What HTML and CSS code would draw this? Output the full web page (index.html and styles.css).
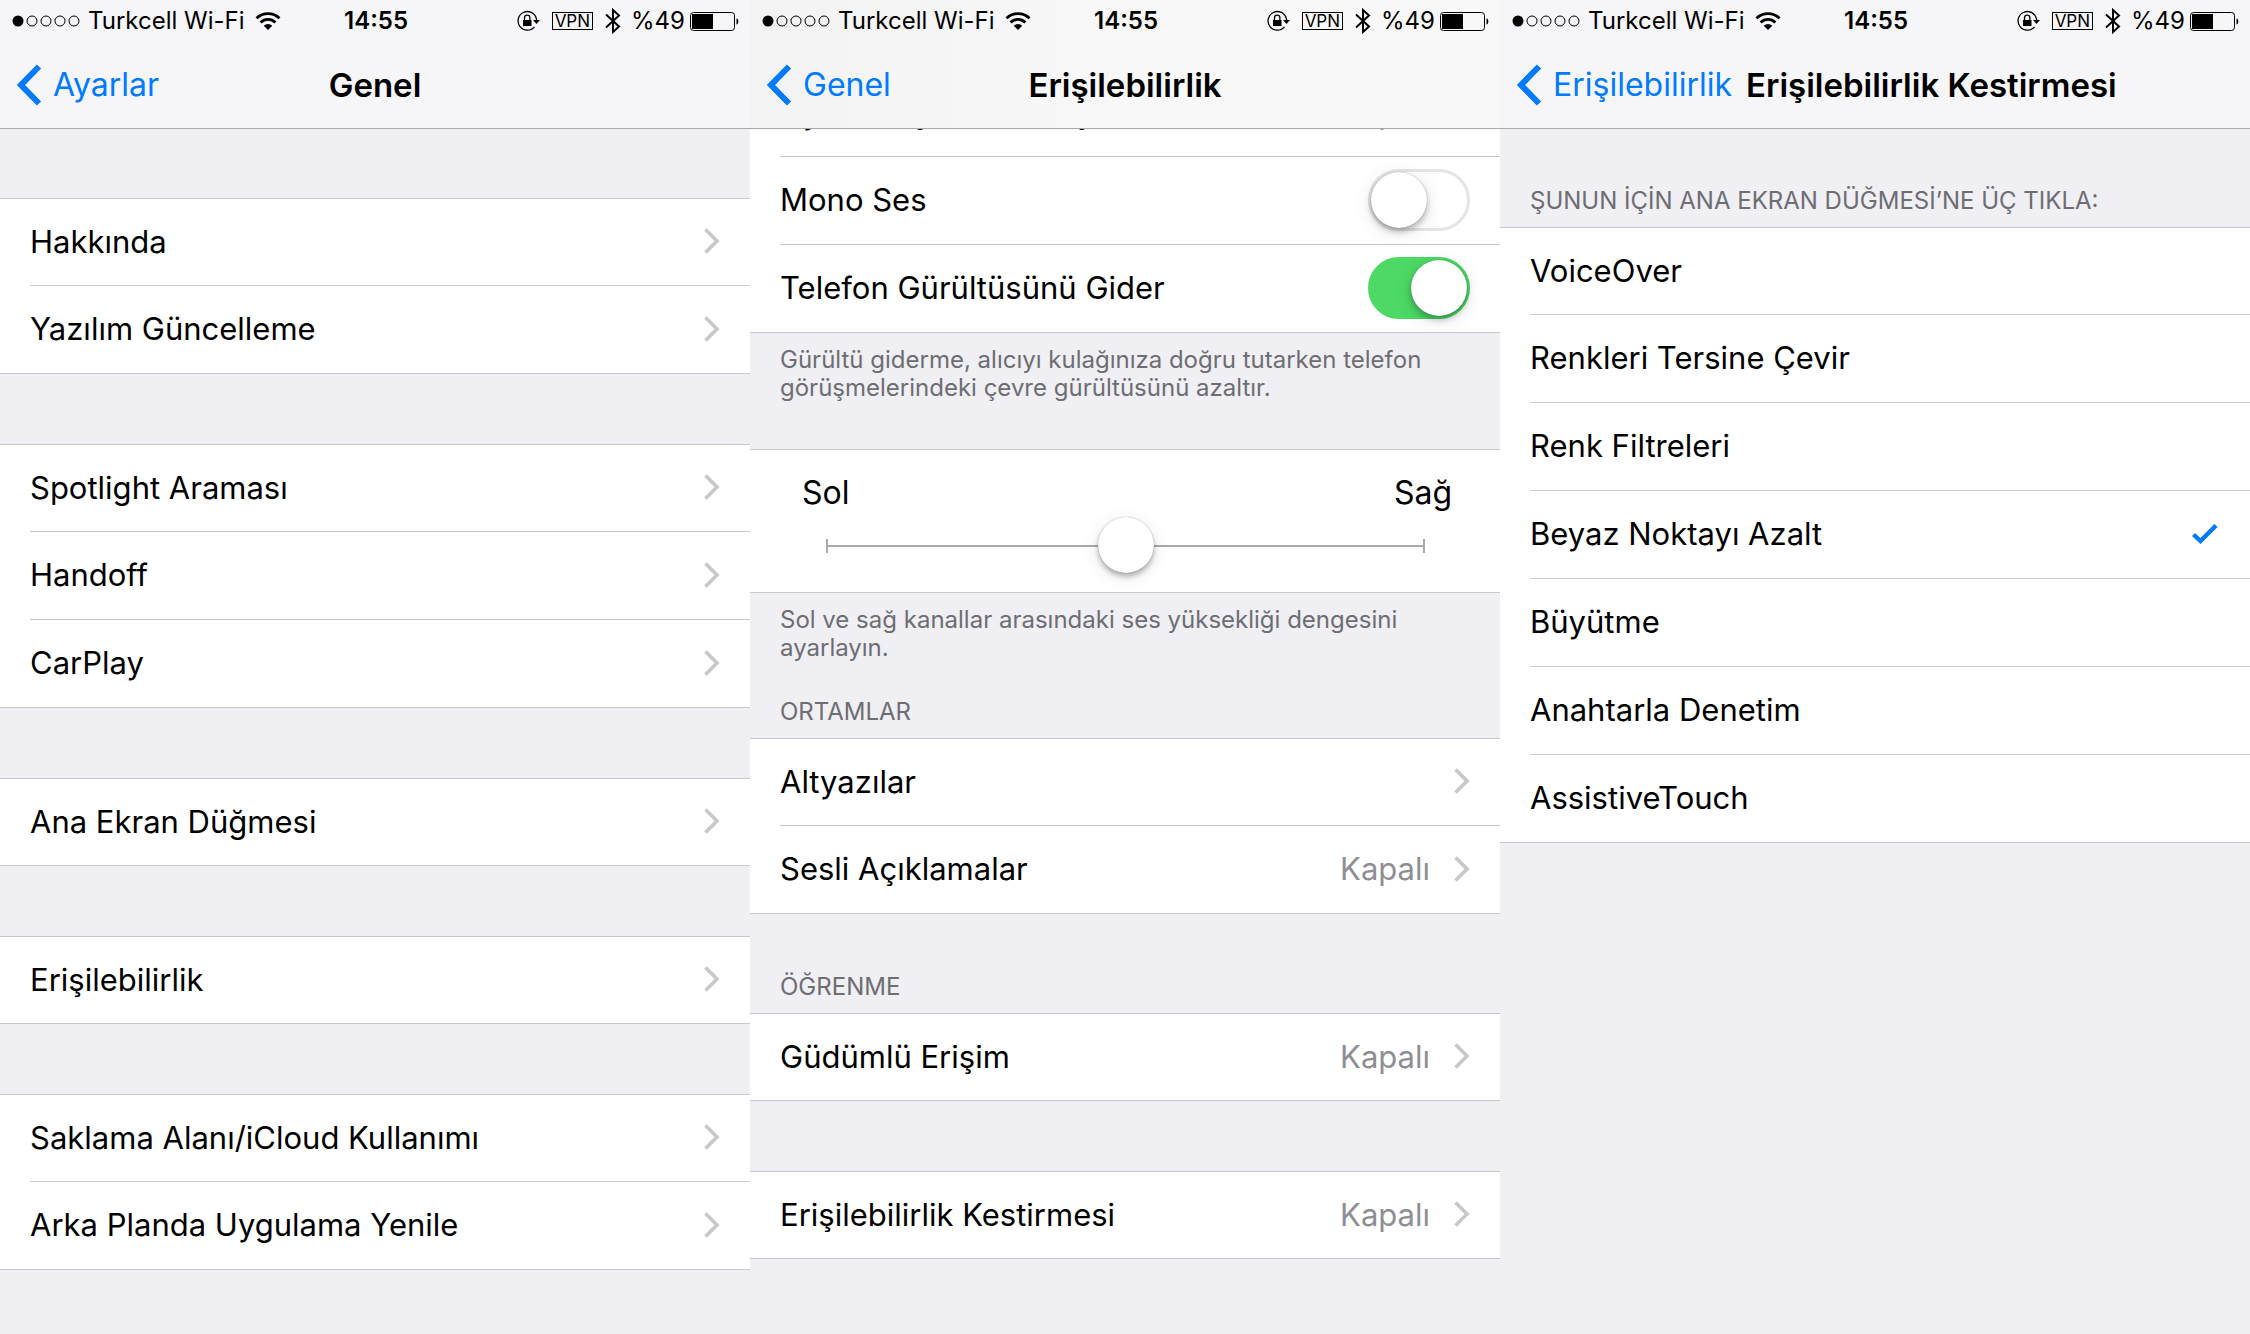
FILE: index.html
```html
<!DOCTYPE html>
<html lang="tr">
<head>
    <meta charset="UTF-8">
    <meta name="viewport" content="width=device-width, initial-scale=1.0">
    <title>Erişilebilirlik Kestirmesi</title>
    <link rel="stylesheet" href="styles.css">
</head>
<body>

<!-- ortak ikonlar -->
<svg class="sprite" aria-hidden="true">
    <symbol id="signal" viewBox="0 0 70 14">
        <circle cx="6" cy="7" r="5.5"/>
        <g fill="none" stroke="currentColor">
            <circle cx="20" cy="7" r="5"/><circle cx="34" cy="7" r="5"/><circle cx="48" cy="7" r="5"/><circle cx="62" cy="7" r="5"/>
        </g>
    </symbol>
    <symbol id="wifi" viewBox="0 0 26 18">
        <g fill="none" stroke="currentColor" stroke-width="2.8">
            <path d="M1.500 6.200a16.500 16.500 0 0 1 23 0"/>
            <path d="M5.600 10.400a10.500 10.500 0 0 1 14.800 0"/>
        </g>
        <path d="M13 18l-4.300-4.300a6 6 0 0 1 8.600 0z"/>
    </symbol>
    <symbol id="lock" viewBox="0 0 24 22">
        <path d="M18.500 16.800a9.300 9.300 0 1 1 1.900-8.200l.3 2" fill="none" stroke="currentColor" stroke-width="1.3"/>
        <path d="M17 10h7l-3.500 4z"/>
        <path d="M7 10h8.500v6H7z"/>
        <path d="M8.500 10V7.800a2.700 2.700 0 0 1 5.400 0V10" fill="none" stroke="currentColor" stroke-width="1.3"/>
    </symbol>
    <symbol id="bluetooth" viewBox="0 0 16 28">
        <path d="M1 7.500L14 19.500L8 25V3l6 5.500L1 20.500" fill="none" stroke="currentColor" stroke-width="2"/>
    </symbol>
    <symbol id="battery" viewBox="0 0 50 20">
        <rect x=".5" y="1.500" width="44" height="18" rx="3" fill="none" stroke="currentColor"/>
        <path d="M2 3h21v15H2zM46.500 7.500c2.500 0 2.500 6 0 6z"/>
    </symbol>
    <symbol id="back" viewBox="0 0 26 42">
        <path d="M23 2.500L5 21l18 18.500" fill="none" stroke="currentColor" stroke-width="6"/>
    </symbol>
    <symbol id="arrow" viewBox="0 0 16 26">
        <path d="M1.500 1.500L13 13L1.500 24.500" fill="none" stroke="currentColor" stroke-width="3.6"/>
    </symbol>
    <symbol id="check" viewBox="0 0 26 20">
        <path d="M1.500 10.500L8.500 17L24 1.500" fill="none" stroke="currentColor" stroke-width="4.4"/>
    </symbol>
</svg>

<main class="screens">

    <!-- Genel -->
    <section class="screen">
        <header class="bar">
            <div class="status">
                <div class="status-left"><svg class="i-signal"><use href="#signal"/></svg><span>Turkcell Wi-Fi</span><svg class="i-wifi"><use href="#wifi"/></svg></div>
                <time>14:55</time>
                <div class="status-right"><svg class="i-lock"><use href="#lock"/></svg><span class="vpn">VPN</span><svg class="i-bt"><use href="#bluetooth"/></svg><span>%49</span><svg class="i-battery"><use href="#battery"/></svg></div>
            </div>
            <nav class="nav">
                <a class="back" href="#"><svg><use href="#back"/></svg>Ayarlar</a>
                <h1>Genel</h1>
            </nav>
        </header>
        <div class="content">
            <ul class="group">
                <li><a class="row" href="#">Hakkında<svg class="arrow"><use href="#arrow"/></svg></a></li>
                <li><a class="row" href="#">Yazılım Güncelleme<svg class="arrow"><use href="#arrow"/></svg></a></li>
            </ul>
            <ul class="group">
                <li><a class="row" href="#">Spotlight Araması<svg class="arrow"><use href="#arrow"/></svg></a></li>
                <li><a class="row" href="#">Handoff<svg class="arrow"><use href="#arrow"/></svg></a></li>
                <li><a class="row" href="#">CarPlay<svg class="arrow"><use href="#arrow"/></svg></a></li>
            </ul>
            <ul class="group">
                <li><a class="row" href="#">Ana Ekran Düğmesi<svg class="arrow"><use href="#arrow"/></svg></a></li>
            </ul>
            <ul class="group">
                <li><a class="row" href="#">Erişilebilirlik<svg class="arrow"><use href="#arrow"/></svg></a></li>
            </ul>
            <ul class="group">
                <li><a class="row" href="#">Saklama Alanı/iCloud Kullanımı<svg class="arrow"><use href="#arrow"/></svg></a></li>
                <li><a class="row" href="#">Arka Planda Uygulama Yenile<svg class="arrow"><use href="#arrow"/></svg></a></li>
            </ul>
        </div>
    </section>

    <!-- Erişilebilirlik -->
    <section class="screen">
        <header class="bar bar-scrolled">
            <div class="status">
                <div class="status-left"><svg class="i-signal"><use href="#signal"/></svg><span>Turkcell Wi-Fi</span><svg class="i-wifi"><use href="#wifi"/></svg></div>
                <time>14:55</time>
                <div class="status-right"><svg class="i-lock"><use href="#lock"/></svg><span class="vpn">VPN</span><svg class="i-bt"><use href="#bluetooth"/></svg><span>%49</span><svg class="i-battery"><use href="#battery"/></svg></div>
            </div>
            <nav class="nav">
                <a class="back" href="#"><svg><use href="#back"/></svg>Genel</a>
                <h1>Erişilebilirlik</h1>
            </nav>
        </header>
        <div class="content scrolled">
            <ul class="group">
                <li><a class="row" href="#">Uyarılar için LED Flaş<span class="value">Kapalı</span><svg class="arrow"><use href="#arrow"/></svg></a></li>
                <li><label class="row" for="mono">Mono Ses<input class="switch" type="checkbox" id="mono"></label></li>
                <li><label class="row" for="noise">Telefon Gürültüsünü Gider<input class="switch" type="checkbox" id="noise" checked></label></li>
            </ul>
            <p class="note">Gürültü giderme, alıcıyı kulağınıza doğru tutarken telefon görüşmelerindeki çevre gürültüsünü azaltır.</p>
            <div class="group balance">
                <div class="sides"><label for="balance">Sol</label><span>Sağ</span></div>
                <input class="slider" type="range" id="balance" min="-1" max="1" step="0.1" value="0">
            </div>
            <p class="note">Sol ve sağ kanallar arasındaki ses yüksekliği dengesini ayarlayın.</p>
            <h2 class="after-note">ORTAMLAR</h2>
            <ul class="group">
                <li><a class="row" href="#">Altyazılar<svg class="arrow"><use href="#arrow"/></svg></a></li>
                <li><a class="row" href="#">Sesli Açıklamalar<span class="value">Kapalı</span><svg class="arrow"><use href="#arrow"/></svg></a></li>
            </ul>
            <h2>ÖĞRENME</h2>
            <ul class="group">
                <li><a class="row" href="#">Güdümlü Erişim<span class="value">Kapalı</span><svg class="arrow"><use href="#arrow"/></svg></a></li>
            </ul>
            <ul class="group">
                <li><a class="row" href="#">Erişilebilirlik Kestirmesi<span class="value">Kapalı</span><svg class="arrow"><use href="#arrow"/></svg></a></li>
            </ul>
        </div>
    </section>

    <!-- Erişilebilirlik Kestirmesi -->
    <section class="screen">
        <header class="bar">
            <div class="status">
                <div class="status-left"><svg class="i-signal"><use href="#signal"/></svg><span>Turkcell Wi-Fi</span><svg class="i-wifi"><use href="#wifi"/></svg></div>
                <time>14:55</time>
                <div class="status-right"><svg class="i-lock"><use href="#lock"/></svg><span class="vpn">VPN</span><svg class="i-bt"><use href="#bluetooth"/></svg><span>%49</span><svg class="i-battery"><use href="#battery"/></svg></div>
            </div>
            <nav class="nav">
                <a class="back" href="#"><svg><use href="#back"/></svg>Erişilebilirlik</a>
                <h1>Erişilebilirlik Kestirmesi</h1>
            </nav>
        </header>
        <div class="content">
            <h2>ŞUNUN İÇİN ANA EKRAN DÜĞMESİ’NE ÜÇ TIKLA:</h2>
            <ul class="group">
                <li><button class="row" type="button">VoiceOver</button></li>
                <li><button class="row" type="button">Renkleri Tersine Çevir</button></li>
                <li><button class="row" type="button">Renk Filtreleri</button></li>
                <li><button class="row" type="button" aria-pressed="true">Beyaz Noktayı Azalt<svg class="check"><use href="#check"/></svg></button></li>
                <li><button class="row" type="button">Büyütme</button></li>
                <li><button class="row" type="button">Anahtarla Denetim</button></li>
                <li><button class="row" type="button">AssistiveTouch</button></li>
            </ul>
        </div>
    </section>

</main>

</body>
</html>
```
FILE: styles.css
```css
* {
    box-sizing: border-box;
}

body {
    margin: 0;
    font-family: Inter, "Liberation Sans", sans-serif;
    font-size: 31px;
    color: #000;
    background-color: #efeff4;
}

h1, h2, p, ul {
    margin: 0;
    padding: 0;
}

ul {
    list-style: none;
}

svg {
    flex: none;
    fill: currentColor;
}

.sprite {
    display: none;
}

.screens {
    display: grid;
    grid-template-columns: repeat(3, minmax(0, 1fr));
    min-height: 100vh;
}

/* üst çubuk */
.bar {
    position: relative;
    z-index: 1;
    background-color: #f6f6f8;
    border-bottom: 1px solid #a9a9ad;
}

.bar-scrolled {
    background: linear-gradient(90deg, #f3f3f3, #f8f8f8 50%);
}

.status {
    display: grid;
    grid-template-columns: 1fr auto 1fr;
    align-items: center;
    height: 41px;
    padding: 0 10px 0 12px;
    font-size: 24px;
}

.status time {
    font-weight: 600;
}

.status-left, .status-right {
    display: flex;
    align-items: center;
}

.status-right {
    justify-content: flex-end;
}

.i-signal {
    width: 70px;
    height: 14px;
    margin-right: 6px;
}

.i-wifi {
    width: 26px;
    height: 18px;
    margin-left: 10px;
}

.i-lock {
    width: 24px;
    height: 22px;
}

.vpn {
    margin: 0 12px;
    padding: 0 2px;
    border: 1px solid #000;
    font-size: 17px;
    line-height: 16px;
}

.i-bt {
    width: 16px;
    height: 28px;
    margin-right: 10px;
}

.i-battery {
    width: 50px;
    height: 20px;
    margin-left: 5px;
}

.nav {
    display: grid;
    grid-template-columns: 1fr auto 1fr;
    align-items: center;
    height: 87px;
}

.nav h1 {
    font-size: 33px;
    font-weight: 600;
}

.back {
    display: flex;
    align-items: center;
    gap: 11px;
    padding: 0 14px 0 16px;
    color: #007aff;
    font-size: 32px;
    text-decoration: none;
}

.back svg {
    width: 26px;
    height: 42px;
}

/* listeler */
.content {
    padding-top: 69px;
}

.scrolled {
    margin-top: -60px;
    padding-top: 0;
}

.group {
    background-color: #fff;
    border: solid #c8c7cc;
    border-width: 1px 0;
}

.group + .group {
    margin-top: 70px;
}

.group li {
    padding-left: 30px;
}

.row {
    display: flex;
    align-items: center;
    width: 100%;
    height: 88px;
    padding: 0 30px 2px 0;
    border: 0;
    border-bottom: 1px solid #c8c7cc;
    background: none;
    color: inherit;
    font: inherit;
    text-align: left;
    text-decoration: none;
}

.group li:first-child .row, .group li:last-child .row {
    height: 87px;
}

.group li:last-child .row {
    border-bottom: 0;
}

.group li:only-child .row {
    height: 86px;
}

.value {
    margin-left: auto;
    color: #8e8e93;
}

.arrow {
    width: 16px;
    height: 26px;
    margin-left: auto;
    color: #c7c7cc;
}

.value + .arrow {
    margin-left: 24px;
}

.check {
    width: 26px;
    height: 20px;
    margin: 0 2px 0 auto;
    color: #007aff;
}

h2, .note {
    padding: 0 30px;
    color: #6d6d72;
    font-size: 24px;
    font-weight: 400;
    line-height: 28px;
}

.note {
    padding-top: 13px;
}

.note + .group {
    margin-top: 47px;
}

h2 {
    padding-top: 59px;
    padding-bottom: 12px;
}

.content > h2:first-child {
    padding-top: 0;
    margin-top: -11px;
}

h2.after-note {
    padding-top: 36px;
}

/* açma kapama düğmesi */
.switch {
    appearance: none;
    width: 102px;
    height: 62px;
    margin: 0 0 0 auto;
    border: 3px solid #e5e5e5;
    border-radius: 31px;
    background-color: #fff;
}

.switch::before {
    content: "";
    display: block;
    width: 56px;
    height: 56px;
    border-radius: 50%;
    background-color: #fff;
    box-shadow: 0 0 1px rgba(0, 0, 0, 0.4), 0 4px 6px rgba(0, 0, 0, 0.25), 0 4px 20px rgba(0, 0, 0, 0.1);
}

.switch:checked {
    border-color: #4cd964;
    background-color: #4cd964;
}

.switch:checked::before {
    margin-left: auto;
}

/* ses dengesi */
.balance {
    padding: 23px 48px 15px 52px;
}

.sides {
    display: flex;
    justify-content: space-between;
    font-size: 32px;
    line-height: 40px;
}

.slider {
    appearance: none;
    display: block;
    width: calc(100% - 51px);
    height: 64px;
    margin: 0 24px;
    background:
        linear-gradient(#aaa, #aaa) left 26px / 2px 14px no-repeat,
        linear-gradient(#aaa, #aaa) right 26px / 2px 14px no-repeat,
        linear-gradient(#aaa, #aaa) left 32px / 100% 2px no-repeat;
}

.slider::-webkit-slider-thumb {
    appearance: none;
    width: 56px;
    height: 56px;
    border-radius: 50%;
    background-color: #fff;
    box-shadow: 0 0 1px rgba(0, 0, 0, 0.4), 0 4px 5px rgba(0, 0, 0, 0.25), 0 4px 18px rgba(0, 0, 0, 0.1);
}
```
